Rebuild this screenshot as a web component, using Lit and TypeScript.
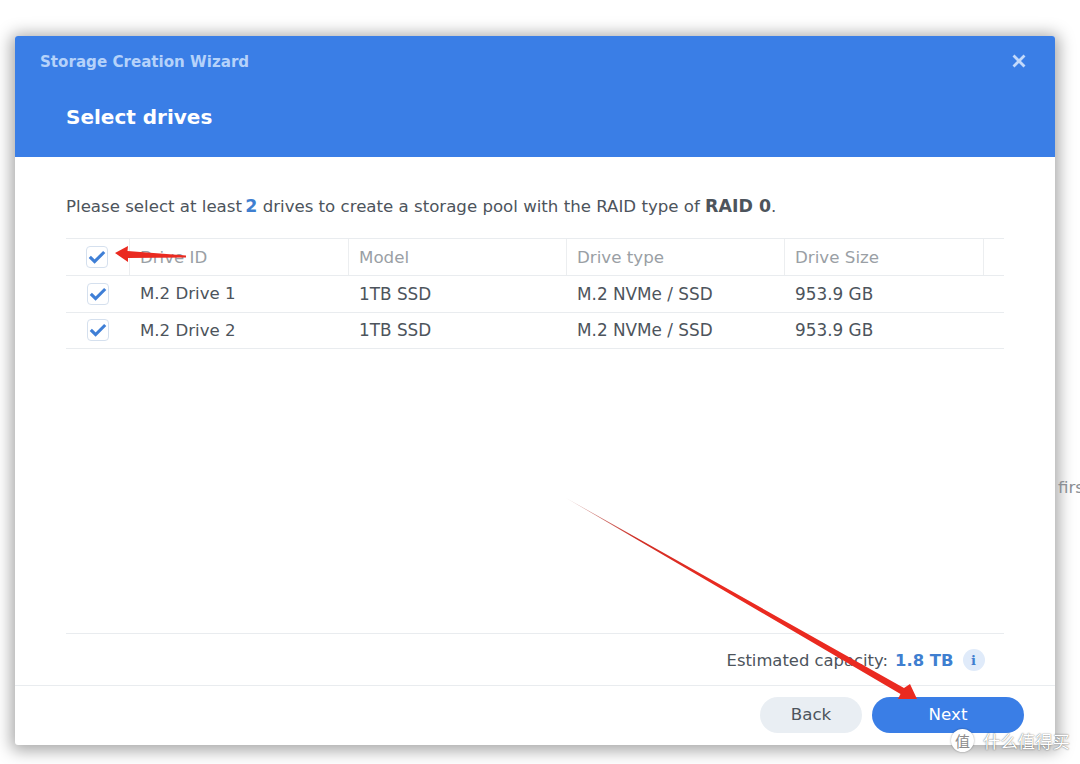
import { LitElement, html, css, svg } from "lit";
import { customElement } from "lit/decorators.js";

const check = html`<span class="cb"><svg width="18" height="14" viewBox="0 0 18 14"><path d="M1.8 6.8 L6.6 11.6 L16.2 2" fill="none" stroke="#3f7fd6" stroke-width="3.1"/></svg></span>`;

const rows = [
  ["M.2 Drive 1", "1TB SSD", "M.2 NVMe / SSD", "953.9 GB"],
  ["M.2 Drive 2", "1TB SSD", "M.2 NVMe / SSD", "953.9 GB"],
];

@customElement("app-root")
export class AppRoot extends LitElement {
  static styles = css`
    :host { display: block; position: relative; width: 1080px; height: 764px; overflow: hidden; background: #fff;
      font-family: "DejaVu Sans", Verdana, sans-serif; color: #4d545c; }
    .page { padding: 36px 25px 0 15px; box-sizing: border-box; height: 764px; }
    .dialog { height: 709px; display: flex; flex-direction: column; background: #fff; border-radius: 3px;
      box-shadow: 0 2px 16px 4px rgba(0,0,0,.34); overflow: hidden; }
    .head { height: 121px; box-sizing: border-box; background: #3a7ee6; padding: 17px 25px 0 25px; flex: none; }
    .top { display: flex; justify-content: space-between; align-items: center; height: 18px; }
    .wiz { font-size: 15.1px; font-weight: 700; color: #b5d2fa; line-height: 18px; }
    .close { display: flex; margin-right: 4px; margin-top: -2px; }
    h1 { margin: 33px 0 0 26px; font-size: 20px; line-height: 26px; font-weight: 700; color: #fff; }
    .body { flex: 1; min-height: 0; display: flex; flex-direction: column; padding: 0 51px; }
    .intro { margin: 40px 0 0; height: 20px; font-size: 16.62px; line-height: 20px; white-space: nowrap; }
    .intro b { font-weight: 700; font-size: 17.4px; line-height: 1; }
    .intro .n { color: #3f7fd0; margin: 0 -1px 0 -2px; padding-right: 1px; }
    .table { margin-top: 21px; }
    .row { display: grid; grid-template-columns: 63px 219px 218px 218px 199px 21px; height: 36.5px; border-bottom: 1px solid #e9ecef;
      font-size: 16.85px; align-items: center; box-sizing: border-box; }
    .row.hd { height: 38px; border-top: 1px solid #e9ecef; color: #9a9fa5; font-size: 16.7px; }
    .row > div { height: 100%; display: flex; align-items: center; padding-left: 11px; box-sizing: border-box; white-space: nowrap; }
    .row > .c0 { padding-left: 21px; }
    .row.hd > .c0 { padding-left: 20px; }
    .row.hd > div + div { border-left: 1px solid #eceef0; padding-left: 10px; }
    .row > .c1 { padding-left: 11px; font-size: 16.6px; }
    .row.hd > .c1 { padding-left: 10px; }
    .cb { width: 22px; height: 22px; box-sizing: border-box; border: 1px solid #d5e0ee; border-radius: 4px; display: flex; align-items: center; justify-content: center; background: #fff; }
    .spacer { flex: 1; }
    .est { height: 52px; border-top: 1px solid #e9ecef; display: flex; align-items: center; justify-content: flex-end;
      padding: 1px 19.5px 0 0; font-size: 16.4px; gap: 8px; box-sizing: border-box; }
    .est b { color: #3f7fd0; font-weight: 700; margin-left: -1px; }
    .info { width: 22px; height: 22px; border-radius: 50%; background: #e0ebfa; color: #3f7fd0; font-size: 13px; font-weight: 700;
      display: flex; align-items: center; justify-content: center; font-family: "DejaVu Serif", serif; margin-left: 1px; }
    .foot { height: 60px; flex: none; border-top: 1px solid #e9ecef; display: flex; justify-content: flex-end; gap: 10px; padding: 11px 31px 0 0; box-sizing: border-box; }
    .btn { height: 36px; border-radius: 18px; border: 0; font: 400 16.7px/34px "DejaVu Sans", sans-serif; padding: 0 0 2px; }
    .back { width: 102px; background: #e9eef3; color: #4d545c; }
    .next { width: 152px; background: #3a7ee6; color: #fff; }
    .behind { position: absolute; left: 1058px; top: 477px; font-size: 16.7px; line-height: 20px; color: #8b8f94; }
    .marks { position: absolute; inset: 0; pointer-events: none; }
    .wm { position: absolute; left: 983px; top: 729px; font: 400 17.4px/24px "Noto Sans CJK SC", sans-serif; color: #fff; white-space: nowrap;
      text-shadow: 0 0 1px rgba(0,0,0,.5), 0 0 2px rgba(0,0,0,.3); }
    .wmlogo { position: absolute; left: 951px; top: 729px; width: 23px; height: 23px; border-radius: 50%; background: #fff; box-shadow: 0 0 2px rgba(0,0,0,.4);
      color: #8b8b8b; font: 400 15px/23px "Noto Sans CJK SC", sans-serif; text-align: center; }
  `;

  render() {
    return html`
      <div class="page">
        <div class="dialog">
          <div class="head">
            <div class="top">
              <span class="wiz">Storage Creation Wizard</span>
              <span class="close"><svg width="14" height="14" viewBox="0 0 14 14"><path d="M1.5 1.5 L12.5 12.5 M12.5 1.5 L1.5 12.5" stroke="#c3dafb" stroke-width="2.8"/></svg></span>
            </div>
            <h1>Select drives</h1>
          </div>
          <div class="body">
            <p class="intro">Please select at least <b class="n">2</b> drives to create a storage pool with the RAID type of <b>RAID 0</b>.</p>
            <div class="table">
              <div class="row hd">
                <div class="c0">${check}</div><div class="c1">Drive ID</div><div>Model</div><div>Drive type</div><div>Drive Size</div><div></div>
              </div>
              ${rows.map(r => html`<div class="row">
                <div class="c0">${check}</div><div class="c1">${r[0]}</div><div>${r[1]}</div><div>${r[2]}</div><div>${r[3]}</div><div></div>
              </div>`)}
            </div>
            <div class="spacer"></div>
            <div class="est"><span>Estimated capacity:</span><b>1.8 TB</b><span class="info">i</span></div>
          </div>
          <div class="foot">
            <button class="btn back">Back</button>
            <button class="btn next">Next</button>
          </div>
        </div>
      </div>
      <div class="behind">firs</div>
      <svg class="marks" width="1080" height="764" viewBox="0 0 1080 764">
        ${svg`
          <defs>
            <linearGradient id="g" gradientUnits="userSpaceOnUse" x1="566" y1="498" x2="720" y2="586">
              <stop offset="0" stop-color="#a8504a" stop-opacity=".45"/>
              <stop offset=".45" stop-color="#cf2f26"/>
              <stop offset="1" stop-color="#ea2a20"/>
            </linearGradient>
          </defs>
          <path d="M566 498 L904 688 L910 684 L917 699 L898 699 L900.5 694 Z" fill="url(#g)"/>
          <path d="M186 255.5 L127.5 251 L128 246 L115 253 L128 262 L128 258 L186 257.5 Z" fill="#ea2a20"/>
        `}
      </svg>
      <div class="wmlogo">值</div>
      <div class="wm">什么值得买</div>
    `;
  }
}
